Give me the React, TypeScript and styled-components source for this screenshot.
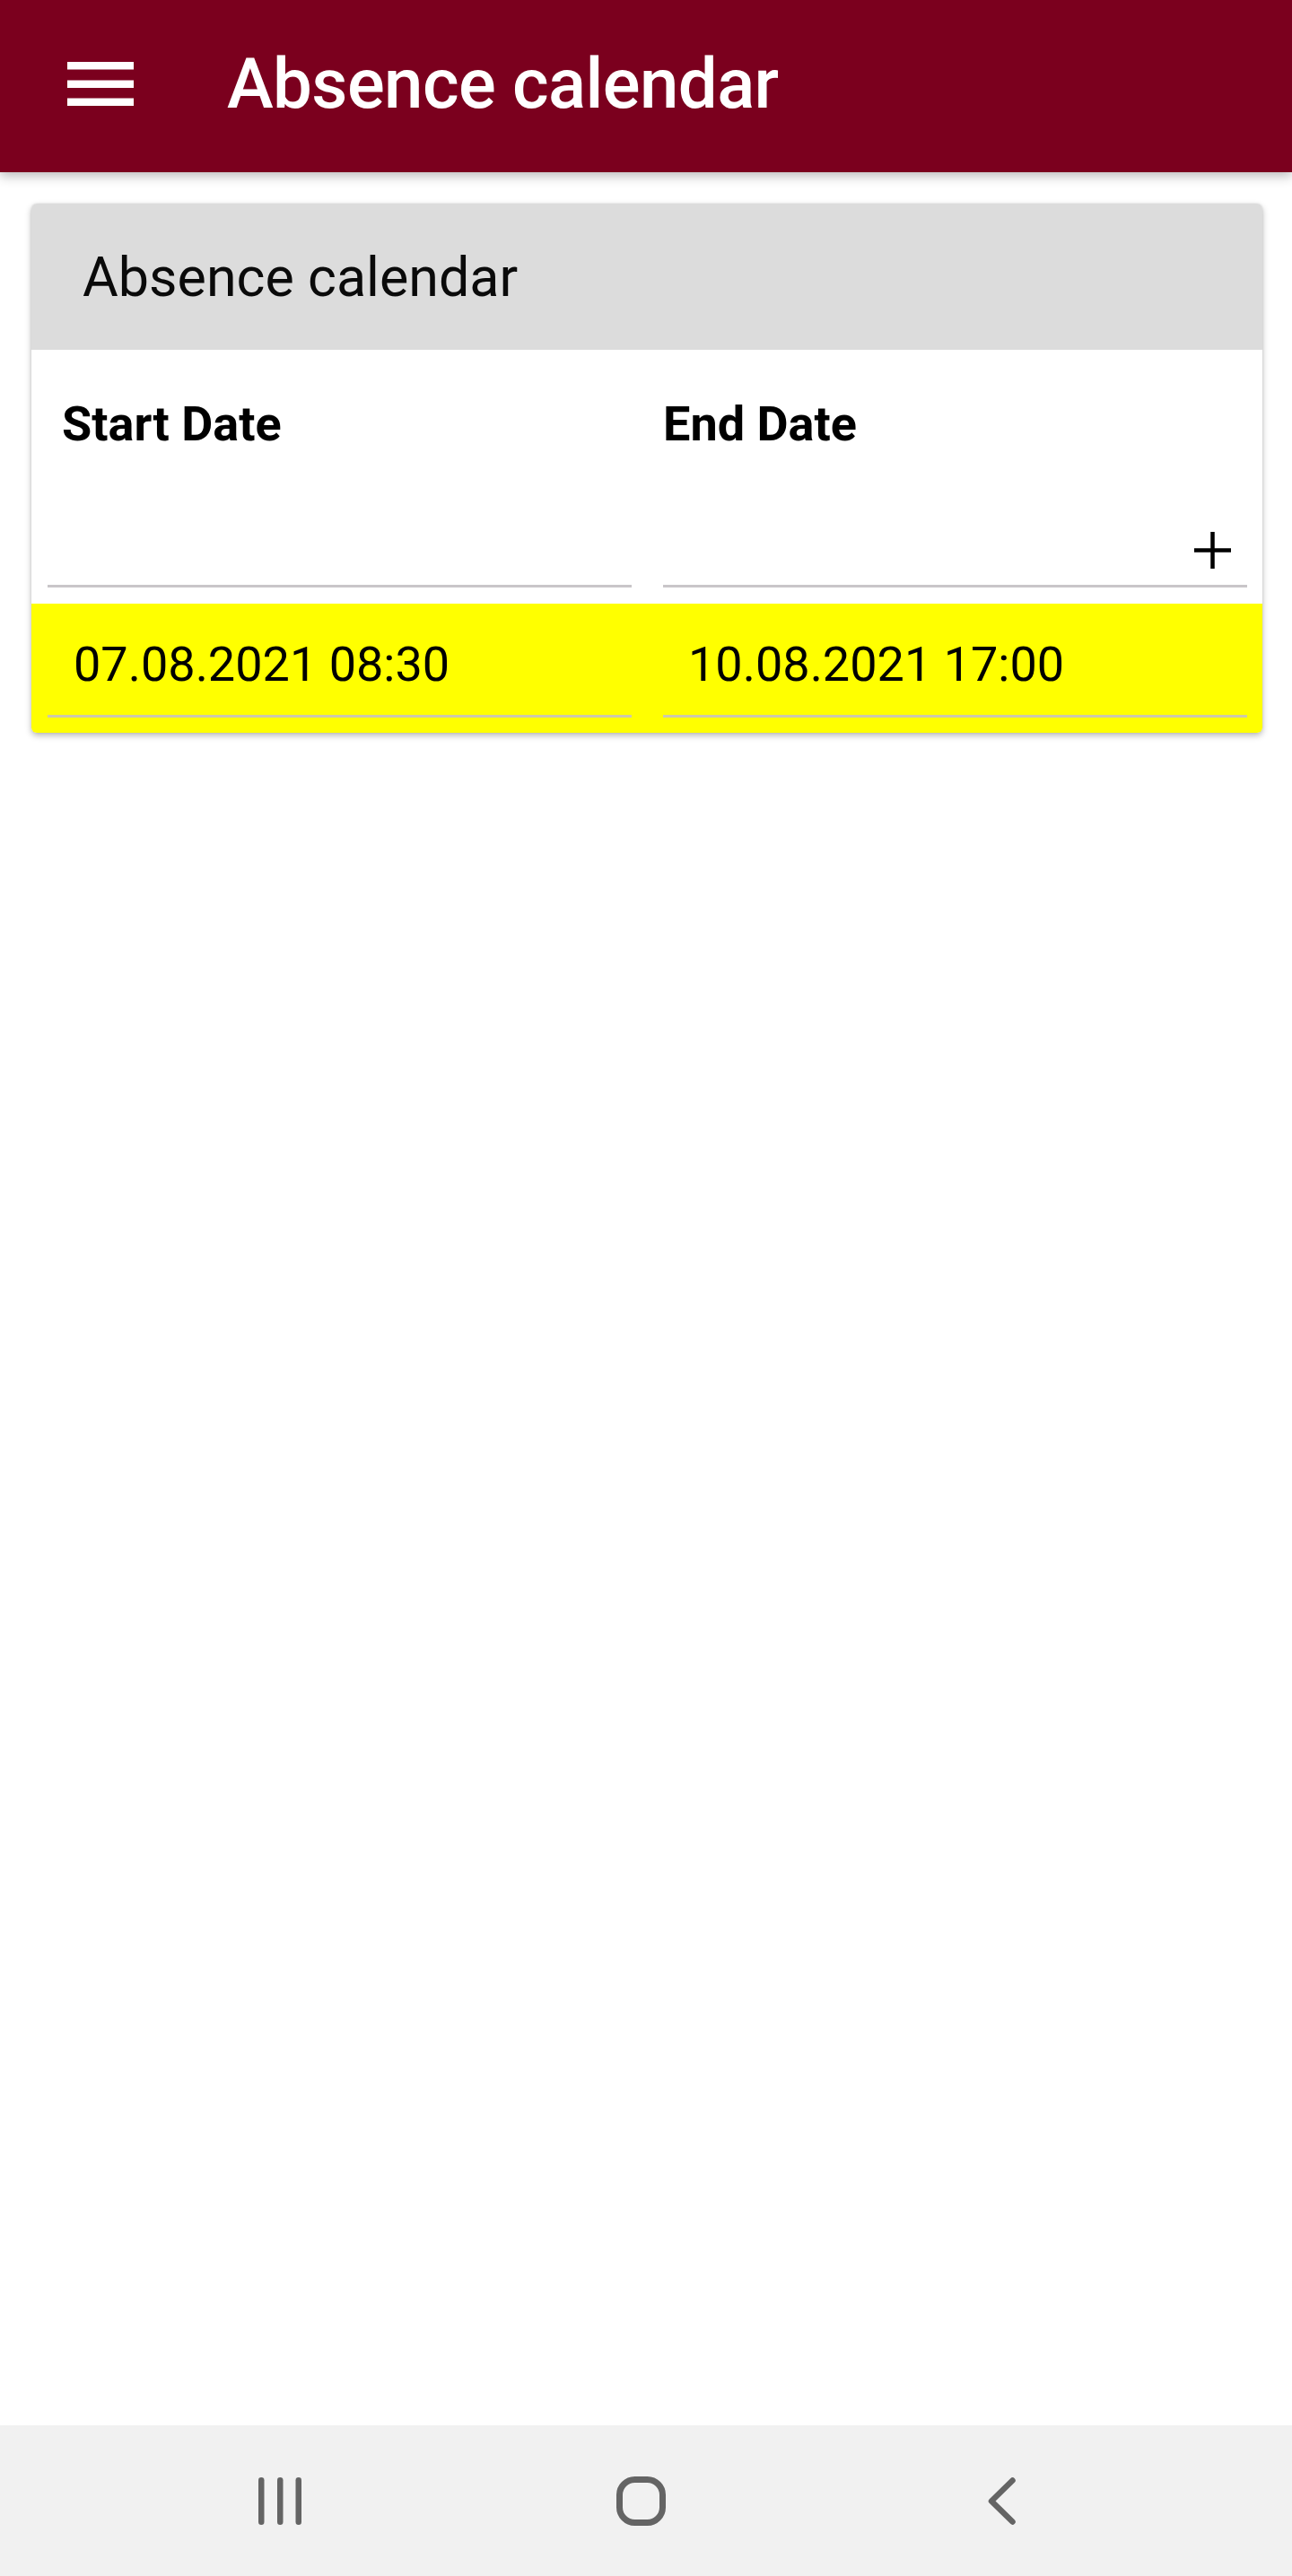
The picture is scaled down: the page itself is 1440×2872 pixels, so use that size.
import React from "react";
import styled, { createGlobalStyle } from "styled-components";

const GlobalStyle = createGlobalStyle`
  html, body {
    margin: 0;
    padding: 0;
    background: #ffffff;
    font-family: Roboto, "Noto Sans", "Liberation Sans", sans-serif;
  }
  * { box-sizing: border-box; }
`;

const Page = styled.div`
  min-height: 100vh;
  display: flex;
  flex-direction: column;
  background: #ffffff;
`;

const AppBar = styled.header`
  height: 192px;
  background: #7b001e;
  display: flex;
  align-items: flex-start;
  padding-left: 75px;
  box-shadow: 0 4px 12px rgba(0, 0, 0, 0.28);
  position: relative;
  z-index: 2;
`;

const MenuButton = styled.div`
  margin-top: 69px;
  width: 74px;
  height: 49px;
  display: flex;
`;

const AppTitle = styled.h1`
  margin: 55px 0 0 104px;
  font-size: 78px;
  line-height: 1;
  font-weight: 500;
  color: #ffffff;
  letter-spacing: -0.6px;
  white-space: nowrap;
`;

const Card = styled.section`
  margin: 35px 33px 0 35px;
  border-radius: 6px;
  overflow: hidden;
  background: #ffffff;
  box-shadow: 0 3px 7px rgba(0, 0, 0, 0.28), 0 0 2px rgba(0, 0, 0, 0.12);
`;

const CardHeader = styled.div`
  height: 163px;
  background: #dcdcdc;
  display: flex;
  align-items: center;
  padding-left: 57px;
  font-size: 61px;
  font-weight: 400;
  color: #0a0a0a;
`;

const Row = styled.div<{ $bg: string }>`
  display: grid;
  grid-template-columns: 1fr 1fr;
  background: ${(p) => p.$bg};
`;

const HeadCell = styled.div`
  display: flex;
  flex-direction: column;
  padding: 56px 17px 18px 18px;
`;

const ColumnLabel = styled.div<{ $indent: number }>`
  font-size: 54px;
  line-height: 1;
  font-weight: 700;
  color: #000000;
  padding-left: ${(p) => p.$indent}px;
  white-space: nowrap;
`;

const FilterField = styled.div`
  height: 155px;
  display: flex;
  justify-content: flex-end;
  align-items: flex-end;
  border-bottom: 3px solid #c9c6c9;
  padding: 0 18px 18px 0;
`;

const BodyCell = styled.div`
  padding: 0 17px 17px 18px;
`;

const ValueField = styled.div<{ $indent: number }>`
  height: 127px;
  padding: 41px 0 0 ${(p) => p.$indent}px;
  border-bottom: 3px solid #cdc9ab;
  font-size: 54px;
  line-height: 1;
  font-weight: 400;
  color: #000000;
  white-space: nowrap;
`;

const NavBar = styled.nav`
  margin-top: auto;
  height: 168px;
  background: #f1f1f1;
  display: flex;
  justify-content: center;
  align-items: center;
  gap: 322px;
  padding: 0 12px 0 0;
`;

const NavSlot = styled.div`
  width: 80px;
  height: 60px;
  display: flex;
  align-items: center;
  justify-content: center;
`;

const HamburgerIcon = () => (
  <svg width="74" height="49" viewBox="0 0 74 49">
    <rect x="0" y="0" width="74" height="8.5" fill="#ffffff" />
    <rect x="0" y="20.5" width="74" height="8.5" fill="#ffffff" />
    <rect x="0" y="40.5" width="74" height="8.5" fill="#ffffff" />
  </svg>
);

const PlusIcon = () => (
  <svg width="41" height="41" viewBox="0 0 41 41">
    <path d="M20.5 0V41M0 20.5H41" stroke="#000000" strokeWidth="4.5" fill="none" />
  </svg>
);

const RecentsIcon = () => (
  <svg width="48" height="53" viewBox="0 0 48 53">
    <rect x="0" y="0" width="6.5" height="53" rx="3.25" fill="#646464" />
    <rect x="21" y="0" width="6.5" height="53" rx="3.25" fill="#646464" />
    <rect x="41.5" y="0" width="6.5" height="53" rx="3.25" fill="#646464" />
  </svg>
);

const HomeIcon = () => (
  <svg width="55" height="55" viewBox="0 0 55 55">
    <rect x="3.5" y="3.5" width="48" height="48" rx="17" fill="none" stroke="#646464" strokeWidth="7" />
  </svg>
);

const BackIcon = () => (
  <svg width="31" height="53" viewBox="0 0 31 53">
    <polyline
      points="27.5,3.5 4,26.5 27.5,49.5"
      fill="none"
      stroke="#646464"
      strokeWidth="6.5"
      strokeLinecap="round"
      strokeLinejoin="round"
    />
  </svg>
);

const entries = [{ start: "07.08.2021 08:30", end: "10.08.2021 17:00" }];

export default function App() {
  return (
    <>
      <GlobalStyle />
      <Page>
        <AppBar>
          <MenuButton>
            <HamburgerIcon />
          </MenuButton>
          <AppTitle>Absence calendar</AppTitle>
        </AppBar>

        <Card>
          <CardHeader>Absence calendar</CardHeader>
          <Row $bg="#ffffff">
            <HeadCell>
              <ColumnLabel $indent={16}>Start Date</ColumnLabel>
              <FilterField />
            </HeadCell>
            <HeadCell>
              <ColumnLabel $indent={0}>End Date</ColumnLabel>
              <FilterField>
                <PlusIcon />
              </FilterField>
            </HeadCell>
          </Row>
          {entries.map((e) => (
            <Row key={e.start} $bg="#ffff00">
              <BodyCell>
                <ValueField $indent={29}>{e.start}</ValueField>
              </BodyCell>
              <BodyCell>
                <ValueField $indent={28}>{e.end}</ValueField>
              </BodyCell>
            </Row>
          ))}
        </Card>

        <NavBar>
          <NavSlot>
            <RecentsIcon />
          </NavSlot>
          <NavSlot>
            <HomeIcon />
          </NavSlot>
          <NavSlot>
            <BackIcon />
          </NavSlot>
        </NavBar>
      </Page>
    </>
  );
}
